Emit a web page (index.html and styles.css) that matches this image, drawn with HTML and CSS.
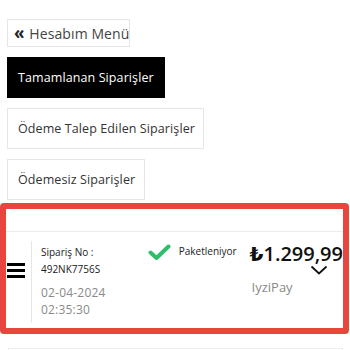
FILE: index.html
```html
<!DOCTYPE html>
<html lang="tr">
<head>
<meta charset="utf-8">
<link rel="stylesheet" href="styles.css">
</head>
<body>
<div class="page">
  <div class="tabs">
    <a class="btn btn-back"><span class="chev">&laquo;</span> Hesabım Menü</a>
    <a class="btn btn-tab tab-1 active">Tamamlanan Siparişler</a>
    <a class="btn btn-tab tab-2">Ödeme Talep Edilen Siparişler</a>
    <a class="btn btn-tab tab-3">Ödemesiz Siparişler</a>
  </div>
  <div class="highlight">
    <div class="order">
      <div class="menu-icon"><span></span><span></span><span></span></div>
      <div class="info">
        <div class="label">Sipariş No :</div>
        <div class="code">492NK7756S</div>
        <div class="date">
          <div>02-04-2024</div>
          <div>02:35:30</div>
        </div>
      </div>
      <div class="status">
        <svg class="check" width="23" height="17" viewBox="0 0 23 17"><path d="M2.5 8.5 L8.5 14 L20.5 2.5" fill="none" stroke="#2fbf6b" stroke-width="4" stroke-linecap="round" stroke-linejoin="round"/></svg>
        <span class="status-text">Paketleniyor</span>
      </div>
      <div class="price-col">
        <div class="price">₺1.299,99</div>
        <svg class="down" width="18" height="10" viewBox="0 0 18 10"><path d="M1.5 1.5 L9 8.5 L16.5 1.5" fill="none" stroke="#111" stroke-width="1.8"/></svg>
        <div class="pay">IyziPay</div>
      </div>
    </div>
  </div>
  <div class="next-card"></div>
</div>
</body>
</html>
```
FILE: styles.css
```css
html, body {
  margin: 0;
  padding: 0;
  background: #fff;
}
body {
  font-family: "Open Sans", "DejaVu Sans", sans-serif;
  color: #222;
  width: 350px;
  height: 350px;
  overflow: hidden;
}
.page {
  padding-top: 19px;
}
.tabs {
  display: flex;
  flex-direction: column;
  align-items: flex-start;
  gap: 10px;
  padding: 0 7px;
}
.btn {
  display: block;
  box-sizing: border-box;
  border: 1px solid #e6e6e6;
  color: #333;
  white-space: nowrap;
}
.btn-back {
  height: 28px;
  width: 123px;
  font-size: 14px;
  line-height: 26px;
  padding-left: 6px;
  color: #444;
  letter-spacing: 0.1px;
}
.chev {
  font-weight: 700;
  font-size: 17px;
  color: #222;
  margin-right: 1px;
}
.btn-tab {
  height: 41px;
  line-height: 39px;
  font-size: 12.5px;
  padding: 0 10px;
  letter-spacing: 0.1px;
}
.tab-1 { width: 158px; }
.tab-2 { width: 197px; }
.tab-3 { width: 138px; }
.btn-tab.active {
  background: #000;
  border-color: #000;
  color: #fff;
}
.highlight {
  margin-top: 3px;
  width: 349px;
  box-sizing: border-box;
  height: 131px;
  border: 6px solid #e8453c;
  border-radius: 4px;
  padding-top: 22px;
}
.order {
  border-top: 1px solid #ebebeb;
  display: flex;
  align-items: flex-start;
  padding-top: 9px;
  height: 90px;
  box-sizing: border-box;
}
.menu-icon {
  width: 18px;
  margin: 22px 0 0 1px;
  display: flex;
  flex-direction: column;
  gap: 3px;
}
.menu-icon span {
  display: block;
  height: 3px;
  background: #000;
}
.info {
  margin-left: 6px;
  border-left: 1px solid #e6e6e6;
  padding-left: 9px;
  width: 107px;
  height: 82px;
  box-sizing: content-box;
}
.label, .code {
  font-size: 10px;
  color: #222;
  line-height: 17px;
}
.label {
  margin-top: 3px;
}
.date {
  margin-top: 7px;
  font-size: 12px;
  line-height: 16.5px;
  color: #8a8a8a;
  letter-spacing: 0.2px;
}
.status {
  width: 102px;
  display: flex;
  align-items: flex-start;
  gap: 8px;
  padding-top: 2px;
}
.check {
  margin-top: 1px;
}
.status-text {
  font-size: 10px;
  color: #222;
  line-height: 14px;
  margin-top: 1px;
}
.price-col {
  flex: 1;
  display: flex;
  flex-direction: column;
  align-items: flex-start;
}
.price {
  font-size: 20px;
  font-weight: 600;
  color: #111;
  line-height: 24px;
  margin-top: 1px;
  white-space: nowrap;
}
.down {
  margin-left: 60px;
  margin-top: -1px;
}
.pay {
  font-size: 13px;
  color: #8a8a8a;
  line-height: 16px;
  margin-top: 4px;
  margin-left: 2px;
}
.next-card {
  margin: 14px 7px 0 8px;
  height: 1px;
  border: 1px solid #eeeeee;
}
```
